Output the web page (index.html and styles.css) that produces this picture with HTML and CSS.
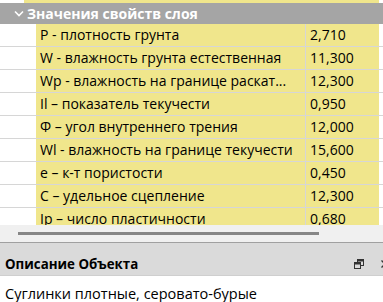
FILE: index.html
```html
<!DOCTYPE html>
<html lang="ru">
<head>
<meta charset="utf-8">
<link rel="stylesheet" href="styles.css">
</head>
<body>
<div class="screen">
  <div class="grid">
    <div class="topstrip"><div class="topstrip-fill"></div></div>
    <div class="group">
      <svg class="chev" width="10" height="7" viewBox="0 0 10 7"><path d="M1 1.5 L5 5.5 L9 1.5" fill="none" stroke="#fff" stroke-width="1.6"/></svg>
      <span class="group-title">Значения свойств слоя</span>
    </div>
    <div class="rows">
      <div class="row"><div class="gutter"></div><div class="name">P - плотность грунта</div><div class="val">2,710</div></div>
      <div class="row"><div class="gutter"></div><div class="name">W - влажность грунта естественная</div><div class="val">11,300</div></div>
      <div class="row"><div class="gutter"></div><div class="name">Wp - влажность на границе раскат...</div><div class="val">12,300</div></div>
      <div class="row"><div class="gutter"></div><div class="name">Il – показатель текучести</div><div class="val">0,950</div></div>
      <div class="row"><div class="gutter"></div><div class="name">Ф – угол внутреннего трения</div><div class="val">12,000</div></div>
      <div class="row"><div class="gutter"></div><div class="name">Wl - влажность на границе текучести</div><div class="val">15,600</div></div>
      <div class="row"><div class="gutter"></div><div class="name">e – к-т пористости</div><div class="val">0,450</div></div>
      <div class="row"><div class="gutter"></div><div class="name">C – удельное сцепление</div><div class="val">12,300</div></div>
      <div class="row"><div class="gutter"></div><div class="name">Ip – число пластичности</div><div class="val">0,680</div></div>
    </div>
  </div>
  <div class="hscroll"><div class="thumb"></div></div>
  <div class="panel-head">
    <span class="panel-title">Описание Объекта</span>
    <span class="panel-icons">
      <svg width="10" height="10" viewBox="0 0 10 10"><rect x="3.5" y="0.5" width="6" height="6" fill="none" stroke="#333"/><rect x="3.5" y="0.5" width="6" height="2" fill="#333"/><rect x="0.5" y="3.5" width="6" height="6" fill="#dadada" stroke="#333"/><rect x="0.5" y="3.5" width="6" height="2" fill="#333"/></svg>
      <svg class="close" width="8" height="8" viewBox="0 0 8 8"><path d="M0.5 0.5 L7.5 7.5 M7.5 0.5 L0.5 7.5" stroke="#333" stroke-width="1.3"/></svg>
    </span>
  </div>
  <div class="panel-body">Суглинки плотные, серовато-бурые</div>
</div>
</body>
</html>
```

FILE: styles.css
```css
html, body {
  margin: 0;
  padding: 0;
  background: #fff;
}
.screen {
  width: 383px;
  height: 302px;
  overflow: hidden;
  font-family: "Open Sans", "Noto Sans", sans-serif;
  font-size: 14px;
  color: #000;
}
.grid {
  height: 225px;
  overflow: hidden;
  background: #fff;
}
.topstrip {
  height: 3px;
  display: flex;
}
.topstrip-fill {
  margin-left: 24px;
  width: 355px;
  background: #f0e68c;
}
.group {
  height: 21px;
  background: #a5a5a5;
  display: flex;
  align-items: center;
  padding-left: 14px;
  gap: 3px;
}
.chev {
  display: block;
}
.group-title {
  color: #fff;
  font-weight: 700;
  font-size: 14px;
  line-height: 21px;
}
.row {
  display: grid;
  grid-template-columns: 36px 270px 73px;
  height: 23px;
  box-sizing: border-box;
  border-bottom: 1px solid #d6d6d6;
}
.gutter {
  background: #fff;
}
.name, .val {
  background: #f0e68c;
  line-height: 22px;
  white-space: nowrap;
  overflow: hidden;
}
.name {
  padding-left: 4px;
  border-right: 1px solid #d6d6d6;
}
.val {
  padding-left: 4px;
}
.hscroll {
  height: 18px;
  background: #f0f0f0;
  border-bottom: 1px solid #a0a0a0;
  display: flex;
  align-items: center;
  padding-left: 18px;
  box-sizing: border-box;
}
.thumb {
  width: 301px;
  height: 3px;
  background: #868686;
}
.panel-head {
  height: 33px;
  background: #dadada;
  display: flex;
  align-items: center;
  justify-content: space-between;
  padding-left: 5px;
  padding-top: 9px;
  border-bottom: 1px solid #cfcfcf;
  box-sizing: border-box;
}
.panel-title {
  font-weight: 700;
  font-size: 13.3px;
}
.panel-icons {
  display: flex;
  align-items: center;
  gap: 17px;
  margin-right: -6px;
}
.panel-icons svg {
  display: block;
}
.panel-body {
  padding: 8px 5px;
  font-size: 14.5px;
  background: #fff;
}
```
